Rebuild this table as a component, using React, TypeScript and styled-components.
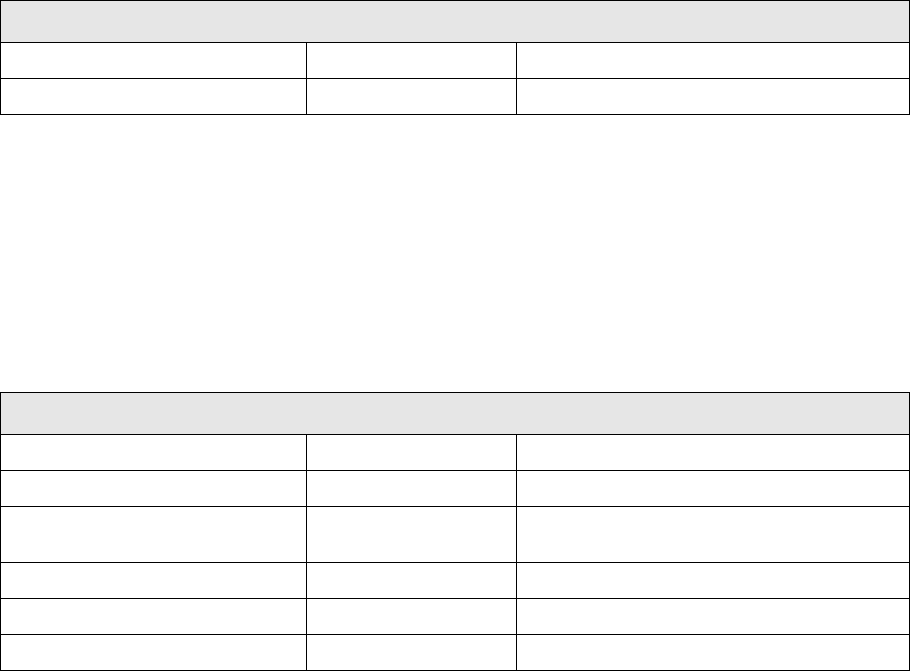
import React from "react";
import styled, { createGlobalStyle } from "styled-components";

const GlobalStyle = createGlobalStyle`
  html, body { margin: 0; padding: 0; background: #ffffff; }
  body { font-family: "Liberation Sans", Arial, sans-serif; font-size: 14px; color: #000; }
`;

const Page = styled.div`
  display: flex;
  flex-direction: column;
  gap: 277px;
  width: 909px;
`;

const Table = styled.table`
  width: 909px;
  border-collapse: collapse;
  table-layout: fixed;
`;

const Col = styled.col<{ $w: number }>`
  width: ${(p) => p.$w}px;
`;

const HeadCell = styled.th`
  height: 41px;
  padding: 0;
  background: #e6e6e6;
  border: 1px solid #000;
`;

const Row = styled.tr<{ $h: number }>`
  height: ${(p) => p.$h}px;
`;

const Cell = styled.td`
  padding: 0;
  border: 1px solid #000;
`;

function DataTable({ rows }: { rows: number[] }) {
  return (
    <Table>
      <colgroup>
        <Col $w={306} />
        <Col $w={210} />
        <Col $w={393} />
      </colgroup>
      <thead>
        <tr>
          <HeadCell colSpan={3} />
        </tr>
      </thead>
      <tbody>
        {rows.map((h, i) => (
          <Row key={i} $h={h}>
            <Cell />
            <Cell />
            <Cell />
          </Row>
        ))}
      </tbody>
    </Table>
  );
}

export default function App() {
  return (
    <>
      <GlobalStyle />
      <Page>
        <DataTable rows={[36, 36]} />
        <DataTable rows={[36, 36, 56, 36, 36, 36]} />
      </Page>
    </>
  );
}
